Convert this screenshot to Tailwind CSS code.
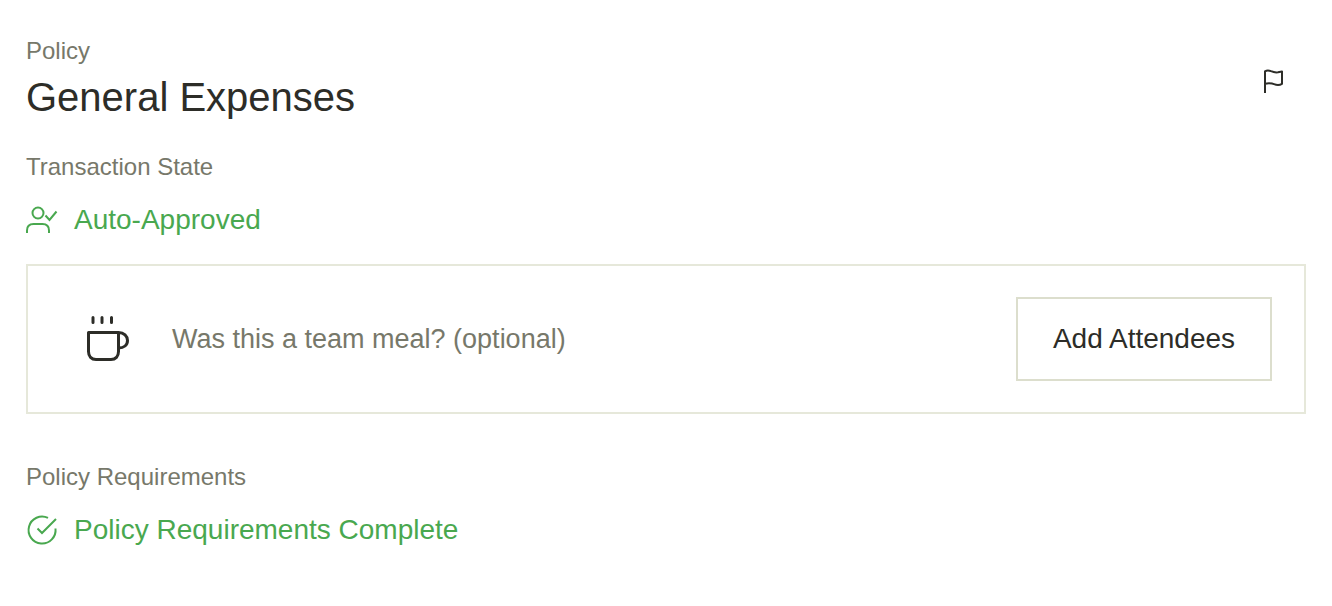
<!DOCTYPE html>
<html lang="en">
<head>
<meta charset="utf-8">
<meta name="viewport" content="width=device-width, initial-scale=1">
<title>Policy</title>
<script src="https://cdn.jsdelivr.net/npm/@tailwindcss/browser@4"></script>
</head>
<body class="bg-white font-['Liberation_Sans',Arial,sans-serif] text-[#2d2d28]">
<main class="px-[26px] pt-[35px] pb-14">
  <header class="flex items-center justify-between">
    <div>
      <p class="text-2xl leading-8 text-[#77786a]">Policy</p>
      <h1 class="mt-1 text-[40px] leading-[52px]">General Expenses</h1>
    </div>
    <button type="button" aria-label="Flag transaction" class="mt-1 mr-3 p-1">
      <svg class="size-8" viewBox="0 0 32 32" fill="none" stroke="currentColor" stroke-width="2" stroke-linejoin="round"><path d="M7 28V6.300C8.500 5.300 11 5.200 13 6.200C15.500 7.300 17.500 7.700 20 7.300L24 6.500V18.800C21.500 20.300 19 20.200 16 19.100C13 18 10 17.800 7 18.800"/></svg>
    </button>
  </header>

  <section class="mt-7">
    <h2 class="text-2xl leading-8 text-[#77786a]">Transaction State</h2>
    <p class="mt-[17px] flex items-center gap-4 text-[28px] leading-10 text-[#49a84f]">
      <svg class="size-8 shrink-0" viewBox="0 0 32 32" fill="none" stroke="currentColor" stroke-width="2" aria-hidden="true"><circle cx="12" cy="9" r="5.500"/><path d="M1 29V26.500C1 22.500 3.500 20 7.500 20H16.500C20.500 20 23 22.500 23 26.500V29M19.500 11.500L23.500 16L30.500 7.500"/></svg>
      Auto-Approved
    </p>
  </section>

  <section class="mt-6 flex items-center border-2 border-[#e6e8da] py-[31px] pr-8 pl-[54px]">
    <svg class="size-12 shrink-0" viewBox="0 0 48 48" fill="none" stroke="currentColor" stroke-width="3" stroke-linecap="round" stroke-linejoin="round" aria-hidden="true"><path d="M11 2.500V7.500M20 2.500V7.500M29.500 2.500V7.500M6.500 17.500H36.500V36.500C36.500 41.500 33.500 44.500 29 44.500H14C9.500 44.500 6.500 41.500 6.500 36.500ZM36.500 17.500C42 17.500 45.500 21 45.500 25.500C45.500 30 42 33 36.500 33"/></svg>
    <p class="ml-[42px] grow text-[27px] leading-10 text-[#77786a]">Was this a team meal? (optional)</p>
    <button type="button" class="w-64 border-2 border-[#dcdecd] py-5 text-[28px] leading-10">Add Attendees</button>
  </section>

  <section class="mt-[47px]">
    <h2 class="text-2xl leading-8 text-[#77786a]">Policy Requirements</h2>
    <p class="mt-[17px] flex items-center gap-4 text-[28px] leading-10 text-[#49a84f]">
      <svg class="size-8 shrink-0" viewBox="0 0 32 32" fill="none" stroke="currentColor" stroke-width="2" aria-hidden="true"><path d="M22 3.900A13.500 13.500 0 1 0 29.500 14.500M11.500 14.500L16 19L30 5"/></svg>
      Policy Requirements Complete
    </p>
  </section>
</main>
</body>
</html>
